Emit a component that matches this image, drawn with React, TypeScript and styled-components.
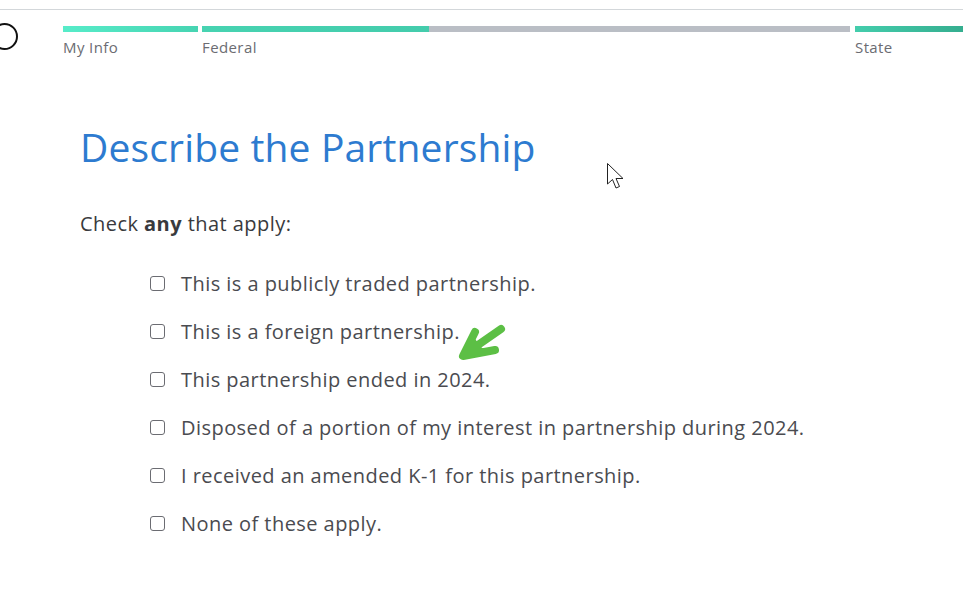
import React from "react";
import styled, { createGlobalStyle } from "styled-components";

const Global = createGlobalStyle`
  html, body { margin: 0; padding: 0; background: #fff; }
  body { font-family: "Open Sans", Lato, sans-serif; overflow: hidden; width: 963px; height: 614px; }
`;

const Page = styled.div`
  position: relative;
  width: 963px;
  height: 614px;
  overflow: hidden;
  padding-top: 9px;
  box-sizing: border-box;
`;

const TopRule = styled.div`
  height: 1px;
  background: #d3d7da;
`;

const Header = styled.div`
  display: flex;
  align-items: flex-start;
  margin-top: 16px;
  height: 40px;
`;

const Ring = styled.div`
  width: 23px;
  height: 23px;
  border: 2px solid #111;
  border-radius: 50%;
  margin-left: -9px;
  margin-top: -3px;
  flex: none;
`;

const Steps = styled.div`
  display: flex;
  margin-left: 45px;
`;

const Step = styled.div<{ $w: number; $gap: number }>`
  width: ${(p) => p.$w}px;
  margin-right: ${(p) => p.$gap}px;
  flex: none;
`;

const Track = styled.div`
  height: 6px;
  background: #babec5;
  position: relative;
  overflow: hidden;
`;

const Fill = styled.div<{ $from: string; $to: string }>`
  height: 100%;
  background: linear-gradient(90deg, ${(p) => p.$from}, ${(p) => p.$to});
`;

const StepLabel = styled.div`
  margin-top: 6px;
  font-size: 15px;
  letter-spacing: 0.4px;
  color: #6b6c72;
  line-height: 18px;
`;

const Main = styled.div`
  padding: 57px 0 0 80px;
`;

const Title = styled.h1`
  margin: 0;
  font-weight: 400;
  font-size: 39px;
  letter-spacing: 0.15px;
  line-height: 48px;
  color: #2d7bd0;
`;

const Prompt = styled.p`
  margin: 40px 0 0;
  font-size: 20px;
  letter-spacing: 0.45px;
  line-height: 26px;
  color: #393a3d;
  b { font-weight: 700; }
`;

const Options = styled.ul`
  list-style: none;
  margin: 33px 0 0 70px;
  padding: 0;
  display: flex;
  flex-direction: column;
  gap: 22px;
`;

const Option = styled.li`
  display: flex;
  align-items: center;
  height: 26px;
  font-size: 20px;
  letter-spacing: 0.45px;
  color: #4a4b50;
`;

const Box = styled.span`
  width: 13px;
  height: 13px;
  border: 1.5px solid #6b6c72;
  border-radius: 3px;
  margin-right: 16px;
  flex: none;
`;

const Overlay = styled.svg<{ $x: number; $y: number }>`
  position: absolute;
  left: ${(p) => p.$x}px;
  top: ${(p) => p.$y}px;
`;

const options = [
  "This is a publicly traded partnership.",
  "This is a foreign partnership.",
  "This partnership ended in 2024.",
  "Disposed of a portion of my interest in partnership during 2024.",
  "I received an amended K-1 for this partnership.",
  "None of these apply.",
];

export default function App() {
  return (
    <>
      <Global />
      <Page>
        <TopRule />
        <Header>
          <Ring />
          <Steps>
            <Step $w={135} $gap={4}>
              <Track>
                <Fill $from="#57ecc9" $to="#47d4b2" style={{ width: "100%" }} />
              </Track>
              <StepLabel>My Info</StepLabel>
            </Step>
            <Step $w={648} $gap={5}>
              <Track>
                <Fill $from="#47d3b1" $to="#44ccac" style={{ width: "35%" }} />
              </Track>
              <StepLabel>Federal</StepLabel>
            </Step>
            <Step $w={135} $gap={0}>
              <Track>
                <Fill $from="#44cdac" $to="#31a688" style={{ width: "100%" }} />
              </Track>
              <StepLabel>State</StepLabel>
            </Step>
          </Steps>
        </Header>
        <Main>
          <Title>Describe the Partnership</Title>
          <Prompt>
            Check <b>any</b> that apply:
          </Prompt>
          <Options>
            {options.map((o) => (
              <Option key={o}>
                <Box />
                {o}
              </Option>
            ))}
          </Options>
        </Main>
        <Overlay $x={450} $y={315} width="60" height="50" viewBox="0 0 60 50">
          <path d="M13 41 L22 20 L32 33 L44 35 Z" fill="#5cbf45" />
          <path
            d="M51 14 L15 39 M25 17 L13 41 L45 35"
            fill="none"
            stroke="#5cbf45"
            strokeWidth="8"
            strokeLinecap="round"
            strokeLinejoin="round"
          />
        </Overlay>
        <Overlay $x={606} $y={162} width="22" height="30" viewBox="0 0 22 30">
          <path
            d="M1.5 1.5 L1.5 22 L6.5 17.5 L10 26 L13.5 24.5 L10 16.5 L17 16.5 Z"
            fill="#fff"
            stroke="#222"
            strokeWidth="1"
            strokeLinejoin="miter"
          />
        </Overlay>
      </Page>
    </>
  );
}
